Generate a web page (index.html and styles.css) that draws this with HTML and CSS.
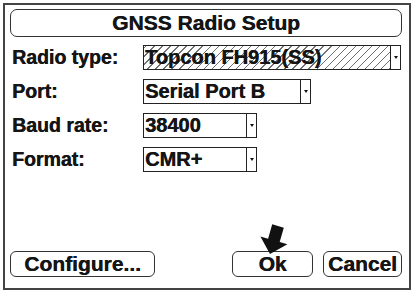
FILE: index.html
```html
<!DOCTYPE html>
<html>
<head>
	<title>GNSS Radio Setup</title>
	<link rel="stylesheet" href="styles.css">
</head>
<body>
<div id="frame">
	<div id="title">GNSS Radio Setup</div>

	<div id="form">
		<span class="label">Radio type:</span>
		<div class="select hatched" id="radio_type">
			<span class="value">Topcon FH915(SS)</span>
			<span class="drop"></span>
		</div>

		<span class="label">Port:</span>
		<div class="select" id="port">
			<span class="value">Serial Port B</span>
			<span class="drop"></span>
		</div>

		<span class="label">Baud rate:</span>
		<div class="select small">
			<span class="value">38400</span>
			<span class="drop"></span>
		</div>

		<span class="label">Format:</span>
		<div class="select small">
			<span class="value">CMR+</span>
			<span class="drop"></span>
		</div>
	</div>

	<div id="buttons">
		<div class="btn" id="configure">Configure...</div>
		<div class="btn" id="ok">Ok
			<svg class="pointer" width="32" height="34" viewBox="0 0 32 34">
				<polygon points="14.2,2.3 25.8,5.7 21.7,20.1 29.4,22.3 12,32 2.4,14.6 10.1,16.8" fill="#111"/>
			</svg>
		</div>
		<div class="btn" id="cancel">Cancel</div>
	</div>
</div>
</body>
</html>
```

FILE: styles.css
```css
body {
	background-color: white;
	margin: 0px;
	font-family: "Liberation Sans", Arial, sans-serif;
	font-weight: bold;
	color: #151515;
	text-shadow: 0.4px 0 0 #151515;
}

#frame {
	box-sizing: border-box;
	width: 408px;
	height: 287px;
	margin: 3px;
	border: 2px solid #444;
	padding: 4px 7px 11px 5px;
	display: flex;
	flex-direction: column;
}

#title {
	box-sizing: border-box;
	height: 28px;
	border: 1.5px solid #333;
	border-radius: 7px;
	text-align: center;
	font-size: 21px;
	line-height: 25px;
}

#form {
	display: grid;
	grid-template-columns: 133px auto;
	row-gap: 9px;
	margin-top: 8px;
}

.label {
	padding-left: 2px;
	font-size: 19.5px;
	line-height: 25px;
}

.select {
	box-sizing: border-box;
	height: 25px;
	border: 1px solid #222;
	display: flex;
	justify-self: start;
	width: 258px;
}
#port {
	width: 168px;
}
.select.small {
	width: 114px;
}

.value {
	flex: 1;
	padding-left: 1px;
	font-size: 20px;
	line-height: 23px;
	white-space: nowrap;
}
.hatched .value {
	background: repeating-linear-gradient(-45deg, #707070 0px, #707070 1px, transparent 1px, transparent 5.7px);
}

.drop {
	width: 9px;
	border-left: 1px solid #222;
	display: flex;
	align-items: center;
	justify-content: center;
}
.drop:after {
	content: "";
	border-left: 2px solid transparent;
	border-right: 2px solid transparent;
	border-top: 3px solid #111;
}

#buttons {
	margin-top: auto;
	display: flex;
}

.btn {
	box-sizing: border-box;
	height: 26px;
	border: 1.5px solid #333;
	border-radius: 6px;
	text-align: center;
	font-size: 21px;
	line-height: 23px;
	position: relative;
}
#configure {
	width: 145px;
}
#ok {
	width: 81px;
	margin-left: auto;
}
#cancel {
	width: 79px;
	margin-left: 10px;
}

.pointer {
	position: absolute;
	left: 25px;
	top: -30px;
}
```
